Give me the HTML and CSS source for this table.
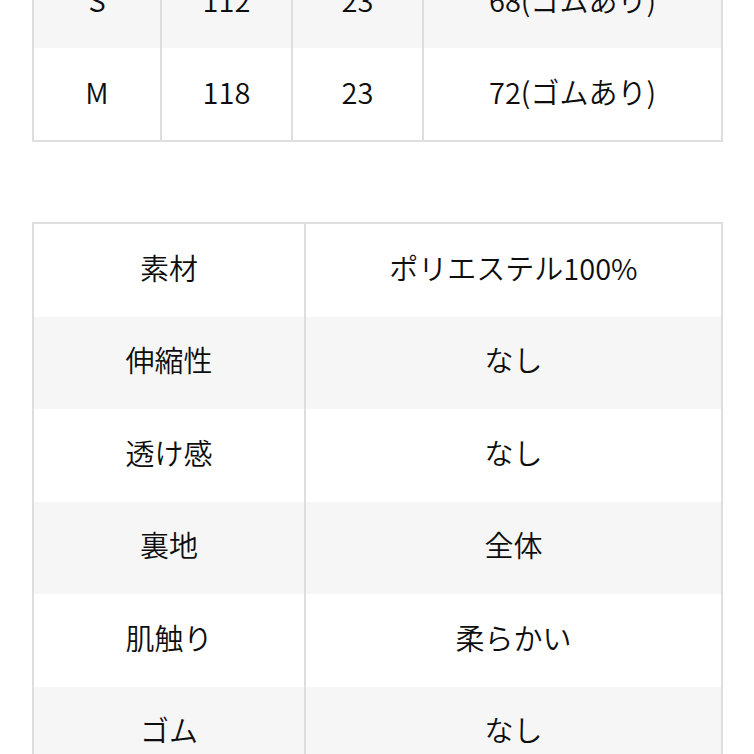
FILE: index.html
```html
<!DOCTYPE html>
<html lang="ja">
<head>
<meta charset="utf-8">
<link rel="stylesheet" href="styles.css">
</head>
<body>
<div class="page">
  <table class="spec size">
    <colgroup><col class="c1"><col class="c2"><col class="c3"><col class="c4"></colgroup>
    <tr class="gray"><td>S</td><td>112</td><td>23</td><td>68(ゴムあり)</td></tr>
    <tr><td>M</td><td>118</td><td>23</td><td>72(ゴムあり)</td></tr>
  </table>

  <table class="spec detail">
    <colgroup><col class="d1"><col class="d2"></colgroup>
    <tr><td>素材</td><td>ポリエステル100%</td></tr>
    <tr class="gray"><td>伸縮性</td><td>なし</td></tr>
    <tr><td>透け感</td><td>なし</td></tr>
    <tr class="gray"><td>裏地</td><td>全体</td></tr>
    <tr><td>肌触り</td><td>柔らかい</td></tr>
    <tr class="gray"><td>ゴム</td><td>なし</td></tr>
  </table>
</div>
</body>
</html>
```
FILE: styles.css
```css
html, body {
  margin: 0;
  padding: 0;
  background: #ffffff;
}
body {
  font-family: "Noto Sans CJK JP", "Noto Sans", sans-serif;
  color: #0e0e0e;
  overflow: hidden;
}
.page {
  margin-top: -46px;
  padding: 0 31px 0 32px;
  display: flex;
  flex-direction: column;
  gap: 80px;
}
.spec {
  width: 100%;
  border-collapse: collapse;
  table-layout: fixed;
  border: 2px solid #dedede;
}
.spec td {
  height: 86px;
  padding: 0 0 6px 0;
  text-align: center;
  vertical-align: middle;
  font-size: 29px;
  font-weight: 350;
  line-height: 1;
  border-left: 2px solid #dedede;
}
.spec tr.gray td {
  background: #f6f6f6;
}
.size .c1 { width: 128px; }
.size .c2 { width: 131px; }
.size .c3 { width: 131px; }
.size .c4 { width: auto; }
.detail .d1 { width: 272px; }
.detail .d2 { width: auto; }
.detail td { height: 86.5px; }
```
